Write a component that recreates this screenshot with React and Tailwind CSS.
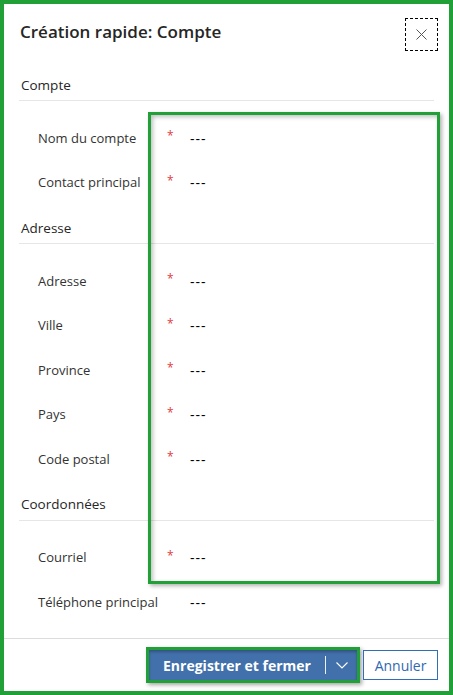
import React from "react";

const SECTIONS = [
  {
    title: "Compte",
    rows: [
      { label: "Nom du compte", required: true },
      { label: "Contact principal", required: true },
    ],
  },
  {
    title: "Adresse",
    rows: [
      { label: "Adresse", required: true },
      { label: "Ville", required: true },
      { label: "Province", required: true },
      { label: "Pays", required: true },
      { label: "Code postal", required: true },
    ],
  },
  {
    title: "Coordonnées",
    rows: [
      { label: "Courriel", required: true },
      { label: "Téléphone principal", required: false },
    ],
  },
];

const Field = ({ label, required }) => (
  <div className="flex h-[44.5px] items-center pl-[34px]">
    <span className="w-[129px] text-[13px] text-[#333]">{label}</span>
    <span className="mb-[4px] w-[23px] text-[12px] leading-none text-[#e0393e]">
      {required ? "*" : ""}
    </span>
    <span className="text-[14px] tracking-[1px] text-black">---</span>
  </div>
);

const Section = ({ title, rows }) => (
  <section>
    <div className="mx-[15px] flex h-[39px] items-end border-b border-[#e6e6e6] pb-[5px] pl-[2px]">
      <h2 className="text-[13.5px] text-[#262626]">{title}</h2>
    </div>
    <div className="pt-[15px]">
      {rows.map((r) => (
        <Field key={r.label} {...r} />
      ))}
    </div>
  </section>
);

export default function App() {
  return (
    <div
      className="relative flex h-[695px] w-[453px] flex-col border-4 border-[#21a038] bg-white"
      style={{ fontFamily: '"Segoe UI", "Open Sans", "Noto Sans", sans-serif' }}
    >
      {/* Header */}
      <header className="flex h-[58px] items-start justify-between pl-[16px] pr-[11px] pt-[14px]">
        <h1 className="pt-[1px] text-[17px] font-semibold text-[#262626]">Création rapide: Compte</h1>
        <button className="flex h-[33px] w-[33px] items-center justify-center border border-dashed border-black">
          <svg width="11" height="11" viewBox="0 0 11 11" stroke="#555" strokeWidth="1">
            <path d="M0.5 0.5 L10.5 10.5 M10.5 0.5 L0.5 10.5" />
          </svg>
        </button>
      </header>

      {/* Form */}
      <div className="flex-1">
        {SECTIONS.map((s) => (
          <Section key={s.title} {...s} />
        ))}
      </div>

      {/* Footer */}
      <footer className="flex h-[53px] items-center justify-end gap-[3px] border-t border-[#dcdcdc] pr-[11px]">
        <div className="flex h-[36px] items-center border-[3px] border-[#21a038] shadow-[2px_2px_4px_rgba(0,0,0,0.35)]">
          <button className="flex h-[30px] w-[208px] items-center bg-[#4270aa] text-white shadow-[inset_0_2px_3px_rgba(0,0,0,0.25)]">
            <span className="w-[176px] text-center text-[14px] font-bold">Enregistrer et fermer</span>
            <span className="h-[18px] w-px bg-white/90" />
            <span className="flex flex-1 items-center justify-center">
              <svg width="12" height="7" viewBox="0 0 12 7" fill="none" stroke="white" strokeWidth="1.1">
                <path d="M0.5 0.5 L6 6 L11.5 0.5" />
              </svg>
            </span>
          </button>
        </div>
        <button className="h-[30px] w-[75px] border border-[#2f6fb4] bg-white text-[14px] text-[#3168b0]">
          Annuler
        </button>
      </footer>

      {/* Highlight overlay */}
      <div className="pointer-events-none absolute left-[144px] top-[108px] h-[472px] w-[292px] border-[3px] border-[#21a038] shadow-[2px_2px_4px_rgba(0,0,0,0.3),inset_2px_2px_4px_rgba(0,0,0,0.25)]" />
    </div>
  );
}
